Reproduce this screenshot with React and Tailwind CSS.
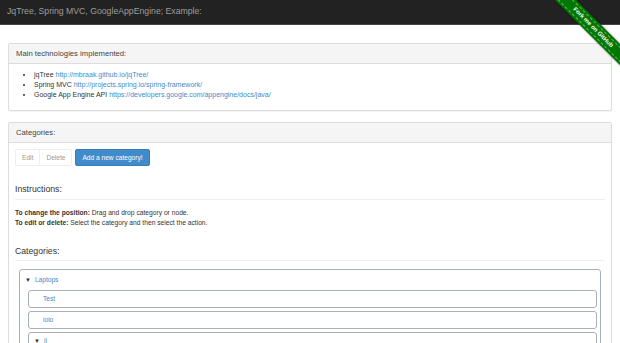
export default function App() {
  return (
    <div className="relative h-[343px] w-[620px] overflow-hidden bg-white font-['Liberation_Sans',Arial,sans-serif] text-[#333]">
      <div className="flex h-[25px] items-center border-b border-[#444] bg-[#222] px-[7px] text-[8.7px] text-[#9d9d9d]">
        JqTree, Spring MVC, GoogleAppEngine; Example:
      </div>

      <div className="absolute left-[523px] top-[20px] w-[140px] rotate-45 bg-[#070] py-[2px] shadow-[0_0_2px_rgba(0,0,0,0.6)]">
        <div className="border-y border-dashed border-white/40 py-[1px] text-center text-[6px] font-bold leading-[7px] text-white">
          Fork me on GitHub
        </div>
      </div>

      <div className="px-[8px] pt-[18px]">
        <div className="rounded-[2px] border border-[#ddd] shadow-[0_1px_1px_rgba(0,0,0,0.05)]">
          <div className="flex h-[20px] items-center border-b border-[#ddd] bg-[#f5f5f5] px-[7px] text-[7.7px] text-[#444]">
            Main technologies implemented:
          </div>
          <ul className="list-disc px-[25px] pb-[10px] pt-[6px] text-[7px] leading-[10px]">
            <li>
              jqTree <a className="text-[#428bca]">http://mbraak.github.io/jqTree/</a>
            </li>
            <li>
              Spring MVC <a className="text-[#428bca]">http://projects.spring.io/spring-framework/</a>
            </li>
            <li>
              Google App Engine API{" "}
              <a className="text-[#428bca]">https://developers.google.com/appengine/docs/java/</a>
            </li>
          </ul>
        </div>

        <div className="mt-[11px] rounded-[2px] border border-[#ddd] shadow-[0_1px_1px_rgba(0,0,0,0.05)]">
          <div className="flex h-[20px] items-center border-b border-[#ddd] bg-[#f5f5f5] px-[7px] text-[7.7px] text-[#444]">
            Categories:
          </div>
          <div className="px-[6px] pt-[6px]">
            <div className="flex items-center gap-[3px] text-[6.6px]">
              <div className="flex">
                <button className="h-[17px] rounded-l-[2px] border border-[#eee] px-[6px] text-[#999]">Edit</button>
                <button className="h-[17px] rounded-r-[2px] border border-l-0 border-[#eee] px-[6px] text-[#999]">
                  Delete
                </button>
              </div>
              <button className="h-[17px] rounded-[2px] border border-[#357ebd] bg-[#428bca] px-[6px] text-white">
                Add a new category!
              </button>
            </div>

            <h3 className="mt-[17px] border-b border-[#eee] pb-[4px] text-[8.7px] leading-[12px]">Instructions:</h3>
            <p className="mt-[8px] text-[6.7px] leading-[10px]">
              <b>To change the position:</b> Drag and drop category or node.
              <br />
              <b>To edit or delete:</b> Select the category and then select the action.
            </p>

            <h3 className="mt-[17px] border-b border-[#eee] pb-[3px] text-[8.7px] leading-[12px]">Categories:</h3>
            <div className="mx-[4px] mt-[8px] rounded-[3px] border border-[#a8b1b8] pb-[4px] pl-[8px] pr-[3px] text-[6.6px]">
              <div className="flex h-[20px] items-center gap-[4px] pl-[1px] pr-[4px] text-[#428bca]">
                <span className="-ml-[4px] text-[6px] text-[#333]">▼</span>Laptops
              </div>
              <div className="flex flex-col gap-[3px]">
                <div className="flex h-[18px] items-center rounded-[3px] border border-[#a8b1b8] pl-[14px] text-[#428bca]">
                  Test
                </div>
                <div className="flex h-[18px] items-center rounded-[3px] border border-[#a8b1b8] pl-[14px] text-[#428bca]">
                  ioio
                </div>
                <div className="flex h-[18px] items-center gap-[4px] rounded-[3px] border border-[#a8b1b8] pl-[5px] text-[#428bca]">
                  <span className="text-[6px] text-[#333]">▼</span>ii
                </div>
              </div>
            </div>
          </div>
        </div>
      </div>
    </div>
  );
}
